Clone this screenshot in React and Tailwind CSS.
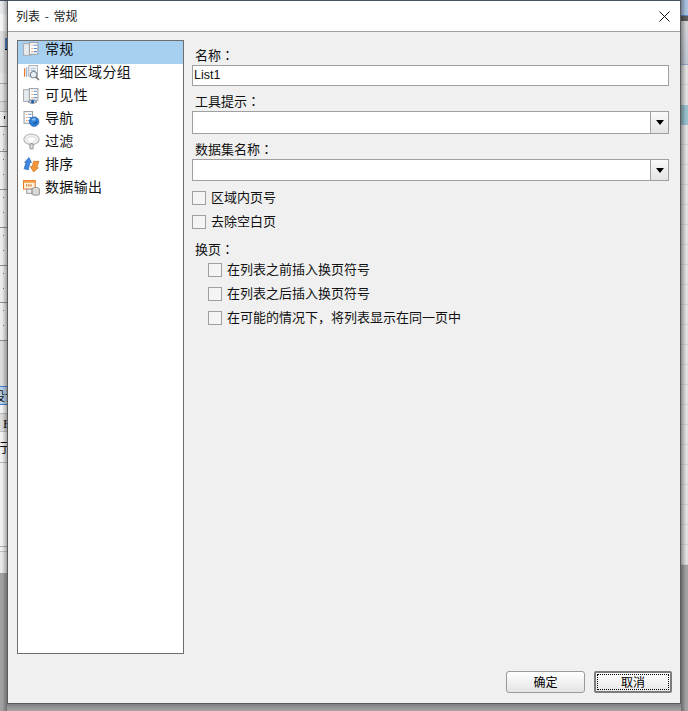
const cjk = { fontFamily: '"Noto Sans CJK SC", sans-serif' };
const tc = { fontFamily: '"Noto Sans CJK TC", sans-serif' };

function Page({ x = 6 }) {
  return (
    <>
      <rect x={x} y="1.5" width="8" height="11" fill="#fff" stroke="#9aa0a8" />
      <path d={`M${x + 2} 4h1M${x + 2} 7h1M${x + 2} 10h1`} stroke="#e8792b" />
      <path d={`M${x + 4} 4h3M${x + 4} 7h3M${x + 4} 10h3`} stroke="#5a8cc8" />
    </>
  );
}

function GeneralIcon() {
  return (
    <svg viewBox="0 0 16 16" className="w-[17px] h-[17px]">
      <rect x="0.5" y="2.5" width="7" height="11" fill="#e8ebee" stroke="#a8adb4" />
      <Page />
    </svg>
  );
}

function DetailIcon() {
  return (
    <svg viewBox="0 0 16 16" className="w-[17px] h-[17px]">
      <path d="M1.5 4v8" stroke="#e8792b" strokeWidth="1.2" />
      <path d="M3.5 3v9" stroke="#7fa5d0" />
      <rect x="5.5" y="1.5" width="8" height="10" fill="#fff" stroke="#a8adb4" />
      <path d="M7 4h5M7 6h5" stroke="#a8b8cc" />
      <circle cx="10" cy="10" r="3" fill="#e4eef8" stroke="#7d868f" />
      <path d="M12 12l3 3" stroke="#6c6c6c" strokeWidth="1.4" />
    </svg>
  );
}

function VisibleIcon() {
  return (
    <svg viewBox="0 0 16 16" className="w-[17px] h-[17px]">
      <rect x="0.5" y="2.5" width="7" height="11" fill="#e8ebee" stroke="#a8adb4" />
      <Page />
      <path d="M5 14q4-4 8 0q-4 3-8 0z" fill="#dfe6ee" stroke="#56606c" strokeWidth="0.7" />
      <circle cx="9" cy="13.8" r="1.5" fill="#1f5fa8" />
    </svg>
  );
}

function NavIcon() {
  return (
    <svg viewBox="0 0 16 16" className="w-[17px] h-[17px]">
      <Page x={1} />
      <circle cx="10.5" cy="11" r="4.5" fill="#2f7fd6" stroke="#1c5aa6" strokeWidth="0.6" />
      <path d="M8 9q2-2 4-1q0 2-2 2t-2-1z" fill="#8fc5f2" />
      <path d="M10 13q2 0 3-2" stroke="#0f4c96" fill="none" />
    </svg>
  );
}

function FilterIcon() {
  return (
    <svg viewBox="0 0 16 16" className="w-[17px] h-[17px]">
      <ellipse cx="8" cy="6" rx="7.2" ry="5" fill="#eeeeee" stroke="#b0b0b0" />
      <path d="M3 6q5-5 10 0q-3 2-4 4H7q-1-2-4-4z" fill="#fff" stroke="#cfcfcf" strokeWidth="0.6" />
      <rect x="6.5" y="10" width="3" height="5" rx="1" fill="#dcdcdc" stroke="#9a9a9a" />
    </svg>
  );
}

function SortIcon() {
  return (
    <svg viewBox="0 0 16 16" className="w-[17px] h-[17px]">
      <path d="M1 12l2-6H1.5L5.5 1.5 8 6H6.5L5 13z" fill="#3f8ae0" stroke="#1d5fb0" strokeWidth="0.6" />
      <path d="M15 5l-2 6h1.5L10 15l-3-5h1.6L10 5z" fill="#f4973c" stroke="#c96a12" strokeWidth="0.6" />
    </svg>
  );
}

function OutputIcon() {
  return (
    <svg viewBox="0 0 16 16" className="w-[17px] h-[17px]">
      <rect x="0.5" y="1.5" width="11" height="8" fill="#fff3df" stroke="#e8792b" />
      <path d="M0.5 1.5h11v2h-11z" fill="#f59a3c" />
      <path d="M3 6h6" stroke="#c96a12" strokeDasharray="1 1" strokeWidth="2" />
      <rect x="3.5" y="9.5" width="5" height="4" fill="#eee" stroke="#a0a0a0" />
      <ellipse cx="12" cy="9.5" rx="3.4" ry="1.5" fill="#e8e8e8" stroke="#777" strokeWidth="0.7" />
      <path d="M8.6 9.5v5c0 1 6.8 1 6.8 0v-5" fill="#d8d8d8" stroke="#777" strokeWidth="0.7" />
    </svg>
  );
}

function Arrow() {
  return (
    <span className="w-[18px] h-full border-l border-[#a0a0a0] bg-gradient-to-b from-[#fafafa] to-[#e4e4e4] flex items-center justify-center">
      <svg viewBox="0 0 8 5" className="w-2 h-[5px]">
        <path d="M0 0h8L4 5z" fill="#000" />
      </svg>
    </span>
  );
}

function Check({ label }) {
  return (
    <div className="h-6 flex items-center gap-[5px] text-[13px] text-[#111]" style={cjk}>
      <span className="w-[14px] h-[14px] border border-[#a0a0a0] bg-[#f4f4f4]" />
      <span className="pb-[3px]">{label}</span>
    </div>
  );
}

function Label({ text, className }) {
  return (
    <div className={`h-5 pl-[3px] leading-5 ${className}`}>
      {text}
      <span style={tc}>：</span>
    </div>
  );
}

const navItems = [
  ["常规", GeneralIcon],
  ["详细区域分组", DetailIcon],
  ["可见性", VisibleIcon],
  ["导航", NavIcon],
  ["过滤", FilterIcon],
  ["排序", SortIcon],
  ["数据输出", OutputIcon],
];

function DotRow({ h }) {
  return (
    <div className={`${h} shrink-0 border-b border-[#8f8f8f] bg-[#ececec] pl-[3px]`}>
      <div className="w-px h-full bg-[repeating-linear-gradient(to_bottom,transparent_0,transparent_7px,#777_7px,#777_8px,transparent_8px,transparent_15px)]" />
    </div>
  );
}

function LeftStrip() {
  return (
    <div className="relative w-[7px] h-full shrink-0 flex flex-col bg-[#a2a2a2] overflow-hidden">
      <div className="h-px bg-[#46525e] shrink-0" />
      <div className="h-[13px] bg-[#e6e9ec] shrink-0" />
      <div className="h-[17px] bg-[#f5f5f5] shrink-0" />
      <div className="h-[42px] bg-[#dedede] shrink-0 pt-[7px] pl-[5px]">
        <div className="w-[2px] h-3 bg-[#4a7fc0] border-b border-black" />
      </div>
      <div className="h-[11px] bg-[#e4e4e4] border-b border-[#a8a8a8] shrink-0" />
      <div className="h-[18px] bg-[#e2e2e2] border-b border-[#b0b0b0] shrink-0" />
      <div className="h-[10px] bg-[#d9d9d9] border-b border-[#b0b0b0] shrink-0" />
      <div className="h-[15px] bg-[#ececec] border-b border-[#666] shrink-0 pt-[4px] pl-[4px]">
        <div className="w-px h-[3px] bg-black" />
      </div>
      <DotRow h="h-[25px]" />
      <DotRow h="h-[38px]" />
      <DotRow h="h-[38px]" />
      <DotRow h="h-[38px]" />
      <DotRow h="h-[37px]" />
      <DotRow h="h-[38px]" />
      <div className="h-[45px] bg-[#dcdcdc] shrink-0" />
      <div className="h-[19px] bg-[#bcd0e8] border-y border-[#3f83d0] shrink-0 text-[12px] leading-[17px] overflow-hidden text-[#111] whitespace-nowrap" style={cjk}>
        <span className="-ml-[7px]">设计</span>
      </div>
      <div className="h-[9px] bg-[#f2f2f2] border-b border-[#b8b8b8] shrink-0" />
      <div className="h-[18px] bg-[#dcdcdc] border-b border-[#c0c0c0] shrink-0 text-[13px] leading-[20px] pl-[3px] text-[#111] overflow-hidden" style={{ fontFamily: '"Liberation Serif", serif' }}>
        E
      </div>
      <div className="h-[31px] bg-[#f2f2f2] border-b border-[#b8b8b8] shrink-0 text-[13px] leading-[30px] overflow-hidden text-[#111]" style={cjk}>
        <span className="-ml-[5px]">行</span>
      </div>
      <div className="h-[84px] bg-[#f0f0f0] border-b border-[#b0b0b0] shrink-0" />
      <div className="h-[5px] bg-[#f0f0f0] border-b border-[#c0c0c0] shrink-0" />
      <div className="h-[21px] bg-[#e8e8e8] shrink-0" />
      <div className="absolute inset-y-0 right-0 w-[5px] bg-gradient-to-r from-transparent to-black/30" />
    </div>
  );
}

function RightStrip() {
  const rows = [1, 2, 3, 4, 5, 6, 7, 8, 9, 10, 11, 12, 13, 14, 15, 16, 17, 18, 19, 20, 21, 22];
  return (
    <div className="relative w-[7px] h-full shrink-0 flex flex-col bg-[#a2a2a2] overflow-hidden">
      <div className="h-4 bg-[#a9c0de] border-b border-[#5b8bc8] shrink-0" />
      <div className="h-[5px] bg-[#5c5c5c] shrink-0" />
      <div className="h-11 bg-gradient-to-b from-[#d4d4d4] to-[#bcc4d2] border-b border-[#8fa5c5] shrink-0" />
      <div className="h-5 bg-[#e0e0e0] border-b border-[#cfcfcf] shrink-0" />
      <div className="h-5 bg-[#e0e0e0] shrink-0" />
      <div className="h-5 bg-[#97c0cc] shrink-0" />
      {rows.map((r) => (
        <div key={r} className="h-[20px] bg-[#e0e0e0] border-b border-[#cfcfcf] shrink-0" />
      ))}
      <div className="absolute inset-y-0 left-0 w-[5px] bg-gradient-to-l from-transparent to-black/35" />
    </div>
  );
}

export default function App() {
  return (
    <div className="w-[688px] h-[711px] flex bg-[#a2a2a2] overflow-hidden">
      <LeftStrip />

      <div className="w-[674px] h-full flex flex-col shrink-0">
        <div className="h-px bg-[#46525e] shrink-0" />

        <div className="h-[703px] shrink-0 flex flex-col border-x border-b border-[#5a5a5a] bg-[#f0f0f0]">
          {/* Title bar */}
          <div className="h-[31px] shrink-0 bg-white border-b border-[#a0a0a0] flex items-center justify-between pl-2 pr-[10px] text-[12px] text-[#222]" style={cjk}>
            <span className="[word-spacing:2px]">列表 - 常规</span>
            <svg viewBox="0 0 11 11" className="w-[11px] h-[11px]">
              <path d="M0.5 0.5l10 10M10.5 0.5l-10 10" stroke="#111" strokeWidth="1" fill="none" />
            </svg>
          </div>

          <div className="flex-1 flex flex-col pt-2">
            <div className="flex gap-2 pl-[9px] pr-[11px]">
              {/* Page list */}
              <div className="w-[167px] h-[614px] shrink-0 border border-[#6e6e6e] bg-white" style={cjk}>
                {navItems.map(([label, Icon], i) => (
                  <div key={label} className={`h-[23px] flex items-start gap-[5px] pl-[5px] text-[14px] tracking-[0.35px] leading-[14px] text-[#111] ${i === 0 ? "bg-[#a6cff0]" : ""}`}>
                    <span className="shrink-0">
                      <Icon />
                    </span>
                    {label}
                  </div>
                ))}
              </div>

              {/* General form */}
              <div className="flex-1 flex flex-col pt-[5px] text-[13px] text-[#111]" style={cjk}>
                <Label text="名称" />
                <div className="h-[21px] border border-[#a0a0a0] bg-white pl-px text-[12.5px] leading-[19px] text-[#111]" style={{ fontFamily: '"Liberation Sans", sans-serif' }}>
                  List1
                </div>

                <Label text="工具提示" className="mt-[5px]" />
                <div className="h-[23px] border border-[#a0a0a0] bg-white flex justify-end">
                  <Arrow />
                </div>

                <Label text="数据集名称" className="mt-[5px]" />
                <div className="h-[22px] border border-[#a0a0a0] bg-white flex justify-end">
                  <Arrow />
                </div>

                <div className="mt-[5px]">
                  <Check label="区域内页号" />
                  <Check label="去除空白页" />
                </div>

                <Label text="换页" className="mt-[5px] -mb-[1px]" />
                <div className="pl-4">
                  <Check label="在列表之前插入换页符号" />
                  <Check label="在列表之后插入换页符号" />
                  <Check label="在可能的情况下，将列表显示在同一页中" />
                </div>
              </div>
            </div>

            {/* Footer buttons */}
            <div className="mt-[17px] pr-2 flex justify-end gap-[9px] text-[12px] text-black" style={cjk}>
              <button className="w-[79px] h-[22px] rounded-[3px] border border-[#9a9a9a] bg-gradient-to-b from-white to-[#e4e4e4] leading-none">
                确定
              </button>
              <button className="w-[78px] h-[22px] rounded-[2px] border-2 border-[#7c7c7c] bg-gradient-to-b from-white to-[#e8e8e8] p-px">
                <span className="flex items-center justify-center w-full h-full border border-dotted border-black leading-none">
                  取消
                </span>
              </button>
            </div>
          </div>
        </div>

        <div className="flex-1 bg-gradient-to-b from-[#808080] to-[#a6a6a6]" />
      </div>

      <RightStrip />
    </div>
  );
}
